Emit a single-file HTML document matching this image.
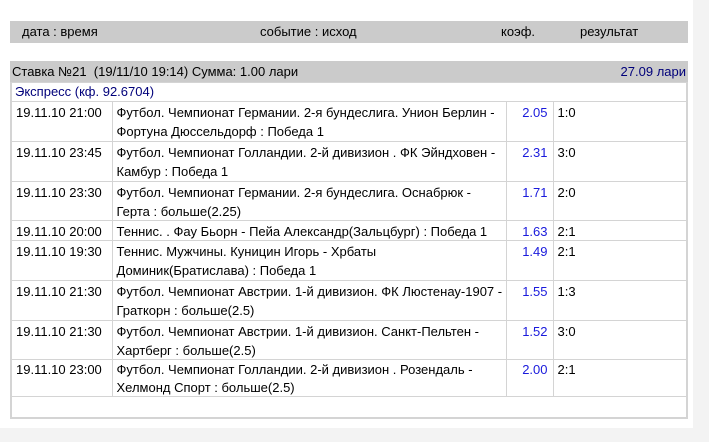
<!DOCTYPE html>
<html><head><meta charset="utf-8"><style>
html,body{margin:0;padding:0;background:#f3f3f3;}
body{width:709px;height:442px;position:relative;overflow:hidden;font-family:"Liberation Sans","DejaVu Sans",sans-serif;font-size:13px;color:#000;}
#w{position:absolute;left:0;top:0;width:693px;height:428px;background:#fff;}
.bar{position:absolute;left:10px;width:678px;background:#cbcbcb;}
#h{top:21px;height:22px;}
#h span{position:absolute;top:3px;}
#s{top:61px;height:21px;}
#s span{position:absolute;top:3px;}
table{position:absolute;left:10px;top:82px;width:678px;border-collapse:collapse;border:2px solid #d4d4d4;border-top:none;table-layout:fixed;}
td{border:1px solid #d4d4d4;padding:0;vertical-align:top;white-space:nowrap;}
td div{box-sizing:border-box;overflow:hidden;padding:1px 4px 0;line-height:19px;}
.k{text-align:right;color:#1a1adc;}
.k div{padding-right:5px;}
</style></head><body><div id="w">
<div class="bar" id="h"><span style="left:12px">дата : время</span><span style="left:250px">событие : исход</span><span style="left:491px">коэф.</span><span style="left:570px">результат</span></div>
<div class="bar" id="s"><span style="left:2px">Ставка №21&nbsp; (19/11/10 19:14) Сумма: 1.00 лари</span><span style="right:2px;color:#00007a">27.09 лари</span></div>
<table>
<colgroup><col style="width:101px"><col style="width:394px"><col style="width:47px"><col></colgroup>
<tr><td colspan="4" style="color:#00007a"><div style="height:18px;padding:0 3px;line-height:18px">Экспресс (кф. 92.6704)</div></td></tr>
<tr><td><div style="height:39px">19.11.10 21:00</div></td><td><div style="height:39px">Футбол. Чемпионат Германии. 2-я бундеслига. Унион Берлин -<br>Фортуна Дюссельдорф : Победа 1</div></td><td class="k"><div style="height:39px">2.05</div></td><td><div style="height:39px">1:0</div></td></tr>
<tr><td><div style="height:39px">19.11.10 23:45</div></td><td><div style="height:39px">Футбол. Чемпионат Голландии. 2-й дивизион . ФК Эйндховен -<br>Камбур : Победа 1</div></td><td class="k"><div style="height:39px">2.31</div></td><td><div style="height:39px">3:0</div></td></tr>
<tr><td><div style="height:38px">19.11.10 23:30</div></td><td><div style="height:38px">Футбол. Чемпионат Германии. 2-я бундеслига. Оснабрюк -<br>Герта : больше(2.25)</div></td><td class="k"><div style="height:38px">1.71</div></td><td><div style="height:38px">2:0</div></td></tr>
<tr><td><div style="height:19px">19.11.10 20:00</div></td><td><div style="height:19px">Теннис. . Фау Бьорн - Пейа Александр(Зальцбург) : Победа 1</div></td><td class="k"><div style="height:19px">1.63</div></td><td><div style="height:19px">2:1</div></td></tr>
<tr><td><div style="height:39px">19.11.10 19:30</div></td><td><div style="height:39px">Теннис. Мужчины. Куницин Игорь - Хрбаты<br>Доминик(Братислава) : Победа 1</div></td><td class="k"><div style="height:39px">1.49</div></td><td><div style="height:39px">2:1</div></td></tr>
<tr><td><div style="height:39px">19.11.10 21:30</div></td><td><div style="height:39px">Футбол. Чемпионат Австрии. 1-й дивизион. ФК Люстенау-1907 -<br>Граткорн : больше(2.5)</div></td><td class="k"><div style="height:39px">1.55</div></td><td><div style="height:39px">1:3</div></td></tr>
<tr><td><div style="height:38px">19.11.10 21:30</div></td><td><div style="height:38px">Футбол. Чемпионат Австрии. 1-й дивизион. Санкт-Пельтен -<br>Хартберг : больше(2.5)</div></td><td class="k"><div style="height:38px">1.52</div></td><td><div style="height:38px">3:0</div></td></tr>
<tr><td><div style="height:36px;line-height:18px">19.11.10 23:00</div></td><td><div style="height:36px;line-height:18px">Футбол. Чемпионат Голландии. 2-й дивизион . Розендаль -<br>Хелмонд Спорт : больше(2.5)</div></td><td class="k"><div style="height:36px;line-height:18px">2.00</div></td><td><div style="height:36px;line-height:18px">2:1</div></td></tr>
<tr><td colspan="4"><div style="height:20px"></div></td></tr>
</table>
</div></body></html>
